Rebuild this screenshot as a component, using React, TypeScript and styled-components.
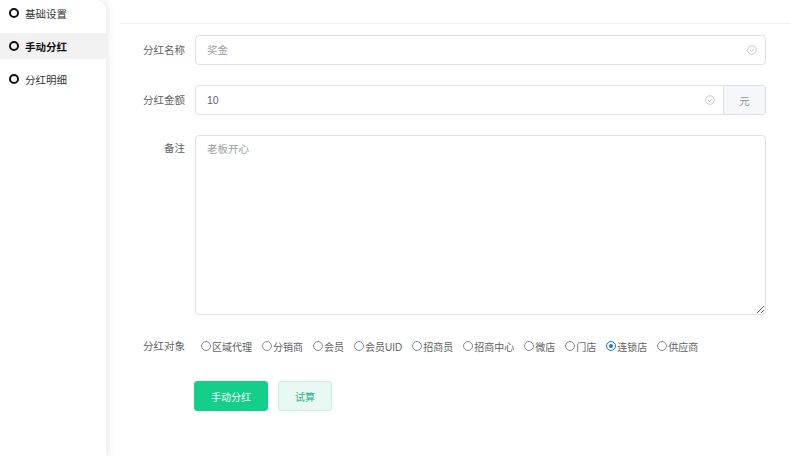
import React, { useState } from 'react';
import styled, { createGlobalStyle } from 'styled-components';

const GlobalStyle = createGlobalStyle`
  html, body {
    margin: 0;
    padding: 0;
    background: #fff;
    font-family: "Liberation Sans", "Noto Sans CJK SC", sans-serif;
  }
`;

const Page = styled.div`
  display: flex;
  width: 791px;
  height: 456px;
  overflow: hidden;
`;

const Sidebar = styled.div`
  width: 106px;
  flex-shrink: 0;
  background: #fff;
  border-top-right-radius: 10px;
  box-shadow: 2px 0 7px rgba(0, 0, 0, 0.09);
  display: flex;
  flex-direction: column;
  gap: 7px;
  position: relative;
  z-index: 1;
`;

const NavItem = styled.div<{ active?: boolean }>`
  display: flex;
  align-items: center;
  height: 26px;
  padding-left: 9px;
  font-size: 10.5px;
  color: ${(p) => (p.active ? '#111' : '#333')};
  font-weight: ${(p) => (p.active ? 700 : 400)};
  background: ${(p) => (p.active ? '#f2f2f2' : 'transparent')};
`;

const NavDot = styled.span`
  width: 10px;
  height: 10px;
  box-sizing: border-box;
  border: 2px solid #111;
  border-radius: 50%;
  margin-right: 6px;
  flex-shrink: 0;
`;

const Main = styled.div`
  flex: 1;
  padding-left: 14px;
`;

const TopBar = styled.div`
  height: 23px;
  border-bottom: 1px solid #f0f0f0;
`;

const Form = styled.div`
  padding: 11px 25px 0 0;
  display: flex;
  flex-direction: column;
`;

const Row = styled.div<{ gap?: number }>`
  display: flex;
  align-items: flex-start;
  margin-bottom: ${(p) => p.gap ?? 20}px;
`;

const Label = styled.div<{ h?: number }>`
  width: 75px;
  flex-shrink: 0;
  box-sizing: border-box;
  padding-right: 10px;
  text-align: right;
  font-size: 10.5px;
  color: #606266;
  line-height: ${(p) => p.h ?? 30}px;
`;

const InputGroup = styled.div`
  flex: 1;
  display: flex;
  height: 30px;
`;

const InputBox = styled.div<{ joined?: boolean }>`
  flex: 1;
  display: flex;
  align-items: center;
  border: 1px solid #dcdfe6;
  border-radius: ${(p) => (p.joined ? '4px 0 0 4px' : '4px')};
  box-sizing: border-box;
  padding: 0 8px 0 11px;
`;

const Input = styled.input`
  flex: 1;
  border: none;
  outline: none;
  font-size: 10.5px;
  color: #606266;
  font-family: inherit;
  padding: 0;
  background: transparent;
  &::placeholder {
    color: #9a9da4;
  }
`;

const Append = styled.div`
  width: 42px;
  box-sizing: border-box;
  border: 1px solid #dcdfe6;
  border-left: none;
  border-radius: 0 4px 4px 0;
  background: #f5f7fa;
  color: #909399;
  font-size: 10.5px;
  display: flex;
  align-items: center;
  justify-content: center;
`;

const TextArea = styled.textarea`
  flex: 1;
  height: 180px;
  box-sizing: border-box;
  border: 1px solid #dcdfe6;
  border-radius: 4px;
  padding: 5px 11px;
  font-size: 10.5px;
  font-family: inherit;
  color: #606266;
  outline: none;
  &::placeholder {
    color: #9a9da4;
  }
`;

const RadioGroup = styled.div`
  display: flex;
  align-items: center;
  gap: 10px;
  padding-left: 6px;
  height: 30px;
`;

const RadioItem = styled.label`
  display: flex;
  align-items: center;
  font-size: 10px;
  color: #606266;
  cursor: pointer;
`;

const RadioCircle = styled.span<{ checked?: boolean }>`
  width: 10px;
  height: 10px;
  box-sizing: border-box;
  border-radius: 50%;
  border: 1.8px solid ${(p) => (p.checked ? '#1a6ee8' : '#878c96')};
  margin-right: 1px;
  display: flex;
  align-items: center;
  justify-content: center;
  &::after {
    content: '';
    width: 4px;
    height: 4px;
    border-radius: 50%;
    background: ${(p) => (p.checked ? '#1a6ee8' : 'transparent')};
  }
`;

const Buttons = styled.div`
  display: flex;
  gap: 10px;
  padding-left: 74px;
  margin-top: 5px;
`;

const Button = styled.button<{ primary?: boolean }>`
  height: 30px;
  padding: 0 16px;
  font-size: 10px;
  font-family: inherit;
  border-radius: 3px;
  cursor: pointer;
  border: 1px solid ${(p) => (p.primary ? '#13cf89' : '#c4efe0')};
  background: ${(p) => (p.primary ? '#13cf89' : '#e8f9f3')};
  color: ${(p) => (p.primary ? '#fff' : '#2fb08a')};
`;

const CheckIcon = () => (
  <svg width="10" height="10" viewBox="0 0 10 10">
    <circle cx="5" cy="5" r="4.3" fill="none" stroke="#c0c4cc" strokeWidth="0.9" />
    <path d="M3 5.1 L4.5 6.5 L7 3.8" fill="none" stroke="#c0c4cc" strokeWidth="0.9" />
  </svg>
);

const targets = ['区域代理', '分销商', '会员', '会员UID', '招商员', '招商中心', '微店', '门店', '连锁店', '供应商'];

const App: React.FC = () => {
  const [target, setTarget] = useState('连锁店');
  const [name, setName] = useState('');
  const [amount, setAmount] = useState('10');

  return (
    <Page>
      <GlobalStyle />
      <Sidebar>
        <NavItem>
          <NavDot />
          基础设置
        </NavItem>
        <NavItem active>
          <NavDot />
          手动分红
        </NavItem>
        <NavItem>
          <NavDot />
          分红明细
        </NavItem>
      </Sidebar>
      <Main>
        <TopBar />
        <Form>
          <Row>
            <Label>分红名称</Label>
            <InputGroup>
              <InputBox>
                <Input placeholder="奖金" value={name} onChange={(e) => setName(e.target.value)} />
                <CheckIcon />
              </InputBox>
            </InputGroup>
          </Row>
          <Row>
            <Label>分红金额</Label>
            <InputGroup>
              <InputBox joined>
                <Input value={amount} onChange={(e) => setAmount(e.target.value)} />
                <CheckIcon />
              </InputBox>
              <Append>元</Append>
            </InputGroup>
          </Row>
          <Row gap={16}>
            <Label h={26}>备注</Label>
            <TextArea placeholder="老板开心" />
          </Row>
          <Row gap={15}>
            <Label>分红对象</Label>
            <RadioGroup>
              {targets.map((t) => (
                <RadioItem key={t} onClick={() => setTarget(t)}>
                  <RadioCircle checked={target === t} />
                  {t}
                </RadioItem>
              ))}
            </RadioGroup>
          </Row>
          <Buttons>
            <Button primary>手动分红</Button>
            <Button>试算</Button>
          </Buttons>
        </Form>
      </Main>
    </Page>
  );
};

export default App;
